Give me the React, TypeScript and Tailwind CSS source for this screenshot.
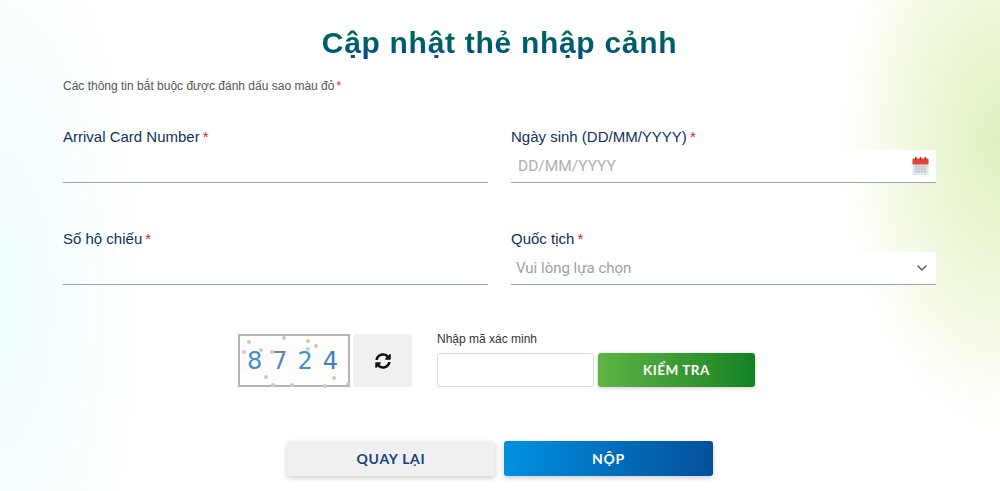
import { ChevronDown } from 'lucide-react';

function Star() {
  return <span className="ml-[3px] text-[#d8232a]">*</span>;
}

function CalendarIcon() {
  return (
    <svg width="17" height="20" viewBox="0 0 17 20">
      <rect x="0.5" y="4" width="16" height="15" fill="#e3e6e8" />
      <rect x="0.5" y="2.5" width="16" height="6" rx="1" fill="#e2453f" />
      <rect x="3" y="1" width="1.5" height="3" fill="#b3332e" />
      <rect x="7.7" y="1" width="1.5" height="3" fill="#b3332e" />
      <rect x="12.5" y="1" width="1.5" height="3" fill="#b3332e" />
      <path d="M3 10.5h11M3 13h11M3 15.5h11M4 9.5v7.5M7 9.5v7.5M10 9.5v7.5M13 9.5v7.5" stroke="#b6bcc2" strokeWidth="0.7" fill="none" />
    </svg>
  );
}

function RefreshIcon() {
  return (
    <svg width="16" height="16" viewBox="0 0 512 512" fill="#111">
      <path d="M370.7 133.3C339.5 104 298.9 88 255.8 88c-77.5.1-144.3 53.2-162.8 126.9-1.3 5.4-6.1 9.2-11.7 9.2H24.1c-7.5 0-13.2-6.8-11.8-14.2C33.9 94.9 134.8 8 256 8c66.4 0 126.8 26.1 171.3 68.7L463 41c15.1-15.1 41-4.4 41 17v134c0 13.3-10.7 24-24 24H346c-21.4 0-32.1-25.9-17-41l41.7-41.7zM32 296h134c21.4 0 32.1 25.9 17 41l-41.8 41.8c31.3 29.3 71.8 45.3 114.9 45.2 77.4-.1 144.3-53.1 162.8-126.8 1.3-5.4 6.1-9.2 11.7-9.2h57.3c7.5 0 13.2 6.8 11.8 14.2C478.1 417.1 377.2 504 256 504c-66.4 0-126.8-26.1-171.3-68.7L49 471c-15.1 15.1-41 4.4-41-17V320c0-13.3 10.7-24 24-24z" />
    </svg>
  );
}

function Captcha() {
  const dots = [
    [7, 4], [42, 0], [66, 3], [74, 8], [2, 14], [19, 12], [30, 14], [24, 39], [92, 40], [31, 47], [50, 47], [83, 48], [66, 11], [106, 46],
  ];
  return (
    <div className="relative flex h-[53px] w-[112px] items-center justify-between border-2 border-[#b5b5b5] bg-[#fffdfb] pl-[7px] pr-[10px] font-['DejaVu_Sans',sans-serif] text-[24px] text-[#3f8fd0]">
      {dots.map(([x, y]) => (
        <span key={`${x}-${y}`} className="absolute h-[4px] w-[4px] rounded-full bg-[#cfc8c8]" style={{ left: x, top: y }} />
      ))}
      <span className="relative">8</span>
      <span className="relative text-[#5a87ad]">7</span>
      <span className="relative">2</span>
      <span className="relative text-[#3a80c0]">4</span>
    </div>
  );
}

export default function App() {
  return (
    <div className="h-[491px] w-[1000px] overflow-hidden bg-white bg-[radial-gradient(ellipse_150px_420px_at_0px_300px,#effcfe_0%,#f7fdfe_55%,#ffffff00_100%),radial-gradient(ellipse_160px_290px_at_1000px_140px,#e0f1c0_0%,#eff8dc_50%,#ffffff00_100%)] pt-[24px] pr-[64px] pl-[63px] font-['Liberation_Sans',sans-serif]">
      <h1 className="bg-gradient-to-b from-[#0b7035] to-[#0b4590] bg-clip-text text-center text-[30px] leading-[37px] font-bold tracking-[0.7px] text-transparent">
        Cập nhật thẻ nhập cảnh
      </h1>

      <p className="mt-[17px] text-[12px] leading-[16px] text-[#555]">
        Các thông tin bắt buộc được đánh dấu sao màu đỏ<span className="ml-[2px] text-[#d8232a]">*</span>
      </p>

      <div className="mt-[33px] grid grid-cols-2 gap-x-[23px] gap-y-[46px] text-[15px] leading-[20px] text-[#12305a]">
        <div>
          <label className="block">Arrival Card Number<Star /></label>
          <div className="mt-[3px] h-[33px] border-b border-[#9aa7ae]" />
        </div>
        <div>
          <label className="block">Ngày sinh (DD/MM/YYYY)<Star /></label>
          <div className="mt-[3px] flex h-[33px] items-center justify-between border-b border-[#9aa7ae] bg-white pr-[7px] pl-[7px] font-['Roboto',sans-serif] text-[15.5px] text-[#b0b0b0]">
            <span>DD/MM/YYYY</span>
            <CalendarIcon />
          </div>
        </div>
        <div>
          <label className="block">Số hộ chiếu<Star /></label>
          <div className="mt-[3px] h-[33px] border-b border-[#9aa7ae]" />
        </div>
        <div>
          <label className="block">Quốc tịch<Star /></label>
          <div className="mt-[3px] flex h-[33px] items-center justify-between border-b border-[#9aa7ae] bg-white pr-[6px] pl-[5px] font-['Roboto',sans-serif] text-[#a0a0a0]">
            <span>Vui lòng lựa chọn</span>
            <ChevronDown size={16} strokeWidth={2} className="text-[#555]" />
          </div>
        </div>
      </div>

      <div className="mt-[46px] ml-[175px] flex items-end">
        <Captcha />
        <button className="ml-[3px] flex h-[53px] w-[59px] items-center justify-center rounded-[3px] bg-[#f0f0f0]">
          <RefreshIcon />
        </button>
        <div className="ml-[25px]">
          <div className="text-[12px] leading-[16px] text-[#333]">Nhập mã xác minh</div>
          <div className="mt-[6px] flex gap-[4px]">
            <div className="h-[34px] w-[157px] rounded-[3px] border border-[#d9d9d9] bg-white" />
            <button className="h-[34px] w-[157px] rounded-[3px] bg-gradient-to-r from-[#5cb545] to-[#128222] font-['Lato',sans-serif] text-[13.5px] font-bold tracking-[0.5px] text-white shadow-[0_1px_4px_rgba(0,0,0,0.2)]">
              KIỂM TRA
            </button>
          </div>
        </div>
      </div>

      <div className="mt-[54px] ml-[224px] flex gap-[9px] font-['Lato',sans-serif] text-[14px] font-bold tracking-[0.7px]">
        <button className="h-[35px] w-[208px] rounded-[3px] bg-[#f0f0f0] text-[#16407f] shadow-[0_2px_5px_rgba(0,0,0,0.2)]">QUAY LẠI</button>
        <button className="h-[35px] w-[209px] rounded-[3px] bg-gradient-to-r from-[#0091e0] to-[#04509b] text-white shadow-[0_2px_5px_rgba(0,0,0,0.2)]">NỘP</button>
      </div>
    </div>
  );
}
